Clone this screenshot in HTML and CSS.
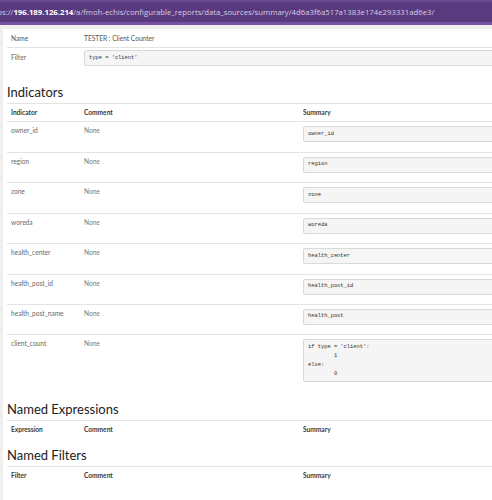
FILE: index.html
```html
<!DOCTYPE html>
<html>
<head>
<meta charset="utf-8">
<link rel="stylesheet" href="styles.css">
</head>
<body>
<div class="urlbar"><span class="url"><span class="scheme">https://</span><span class="host">196.189.126.214</span>/a/fmoh-echis/configurable_reports/data_sources/summary/4d6a3f6a517a1383e174e293331ad6e3/</span></div>
<div class="page">
  <div class="content">
    <table class="tbl meta">
      <tr class="first"><td class="c1">Name</td><td>TESTER : Client Counter</td></tr>
      <tr><td class="c1 lbl">Filter</td><td class="boxcell"><pre class="code">type = 'client'</pre></td></tr>
    </table>

    <h2 class="heading">Indicators</h2>
    <table class="tbl">
      <thead><tr><th class="c1">Indicator</th><th class="c2">Comment</th><th class="c3">Summary</th></tr></thead>
      <tbody>
        <tr><td class="c1">owner_id</td><td class="c2">None</td><td class="boxcell"><pre class="code">owner_id</pre></td></tr>
        <tr><td class="c1">region</td><td class="c2">None</td><td class="boxcell"><pre class="code">region</pre></td></tr>
        <tr><td class="c1">zone</td><td class="c2">None</td><td class="boxcell"><pre class="code">zone</pre></td></tr>
        <tr><td class="c1">woreda</td><td class="c2">None</td><td class="boxcell"><pre class="code">woreda</pre></td></tr>
        <tr><td class="c1">health_center</td><td class="c2">None</td><td class="boxcell"><pre class="code">health_center</pre></td></tr>
        <tr><td class="c1">health_post_id</td><td class="c2">None</td><td class="boxcell"><pre class="code">health_post_id</pre></td></tr>
        <tr><td class="c1">health_post_name</td><td class="c2">None</td><td class="boxcell"><pre class="code">health_post</pre></td></tr>
        <tr><td class="c1">client_count</td><td class="c2">None</td><td class="boxcell"><pre class="code">if type = 'client':
        1
else:
        0</pre></td></tr>
      </tbody>
    </table>

    <h2 class="heading">Named Expressions</h2>
    <table class="tbl">
      <thead><tr><th class="c1">Expression</th><th class="c2">Comment</th><th class="c3">Summary</th></tr></thead>
    </table>

    <h2 class="heading">Named Filters</h2>
    <table class="tbl">
      <thead><tr><th class="c1">Filter</th><th class="c2">Comment</th><th class="c3">Summary</th></tr></thead>
    </table>
  </div>
</div>
</body>
</html>
```

FILE: styles.css
```css
html, body {
  margin: 0;
  padding: 0;
  overflow: hidden;
}
body {
  background: #efeff0;
  font-family: Lato, "Open Sans", sans-serif;
  width: 492px;
  height: 500px;
}
.urlbar {
  height: 20px;
  background: #5a3a7e;
  border-top: 2px solid #6a4893;
  border-bottom: 3px solid #7651a3;
  display: flex;
  align-items: center;
  white-space: nowrap;
  overflow: hidden;
}
.url {
  font-family: "Open Sans", sans-serif;
  font-size: 7.75px;
  color: #d6cde3;
  margin-left: -13px;
}
.host {
  color: #ffffff;
  font-weight: 700;
}
.page {
  padding: 4px 0 0 3px;
}
.content {
  background: #ffffff;
  width: 600px;
  height: 480px;
  padding-left: 4px;
}
.tbl {
  border-collapse: collapse;
  width: 100%;
  table-layout: fixed;
  font-size: 6.6px;
  color: #666;
}
.tbl td, .tbl th {
  padding: 4px 4px 0 4px;
  vertical-align: top;
  text-align: left;
  line-height: 9px;
}
.c1 { width: 65px; }
.c2 { width: 211px; }
.tbl th {
  font-weight: 700;
  color: #3a3a3a;
  padding: 4px 4px 4px 4px;
  border-top: 1px solid #e3e3e3;
}
.tbl tbody tr td {
  border-top: 1px solid #e3e3e3;
  color: #6a6a6a;
}
.tbl tbody td.c2 { color: #7a7a7a; }
.tbl td.boxcell {
  padding-top: 4px;
}
.meta tr.first td {
  border-top: none;
  padding-top: 5px;
  padding-bottom: 4px;
  color: #555;
}
.meta tr + tr td {
  border-top: 1px solid #e3e3e3;
}
.meta td.lbl {
  padding-top: 5px;
}
.meta td.boxcell {
  padding-top: 2px;
}
.code {
  margin: 0 0 9.43px 0;
  font-family: "Liberation Mono", "DejaVu Sans Mono", monospace;
  font-size: 5.4px;
  line-height: 9px;
  color: #333;
  background: #f5f5f5;
  border: 1px solid #d9d9d9;
  border-radius: 2px;
  padding: 2.5px 4px;
  white-space: pre;
}
.heading {
  margin: 9px 0 3px 0;
  font-size: 13px;
  line-height: 16px;
  font-weight: 400;
  color: #222;
}
```
